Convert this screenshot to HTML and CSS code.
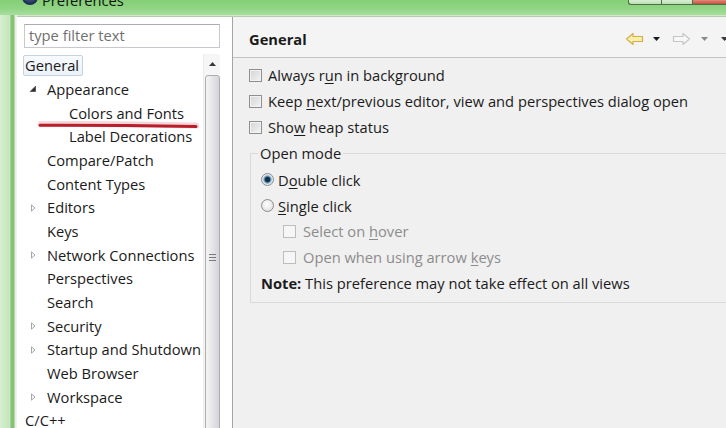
FILE: index.html
```html
<!DOCTYPE html>
<html>
<head>
<meta charset="utf-8">
<title>Preferences</title>
<link rel="stylesheet" href="styles.css">
</head>
<body>
<div class="window">
  <div class="titlebar">
    <span class="app-icon"></span>
    <span class="title">Preferences</span>
    <span class="spacer"></span>
    <div class="caption-buttons">
      <span class="cap cap-min"></span><span class="cap cap-max"></span><span class="cap cap-close"></span>
    </div>
  </div>
  <div class="frame">
    <div class="frame-left"></div>
    <div class="client">
      <div class="sidebar">
        <div class="filter">type filter text</div>
        <div class="tree-wrap">
          <ul class="tree">
            <li class="node lvl0"><span class="label selected">General</span></li>
            <li class="node lvl1"><span class="twisty"><svg width="8" height="8" viewBox="0 0 8 8"><path d="M6.5 1.2 L6.5 6.5 L1.2 6.5 Z" fill="#2e2e2e" stroke="#4a4a4a" stroke-width="0.8" stroke-linejoin="round"/></svg></span><span class="label">Appearance</span></li>
            <li class="node lvl2"><span class="twisty"></span><span class="label">Colors and Fonts</span></li>
            <li class="node lvl2"><span class="twisty"></span><span class="label">Label Decorations</span></li>
            <li class="node lvl1"><span class="twisty"></span><span class="label">Compare/Patch</span></li>
            <li class="node lvl1"><span class="twisty"></span><span class="label">Content Types</span></li>
            <li class="node lvl1"><span class="twisty"><svg width="8" height="8" viewBox="0 0 8 8"><path d="M2.5 0.8 L6 4 L2.5 7.2 Z" fill="#fafafa" stroke="#a8a8a8" stroke-width="1" stroke-linejoin="round"/></svg></span><span class="label">Editors</span></li>
            <li class="node lvl1"><span class="twisty"></span><span class="label">Keys</span></li>
            <li class="node lvl1"><span class="twisty"><svg width="8" height="8" viewBox="0 0 8 8"><path d="M2.5 0.8 L6 4 L2.5 7.2 Z" fill="#fafafa" stroke="#a8a8a8" stroke-width="1" stroke-linejoin="round"/></svg></span><span class="label">Network Connections</span></li>
            <li class="node lvl1"><span class="twisty"></span><span class="label">Perspectives</span></li>
            <li class="node lvl1"><span class="twisty"></span><span class="label">Search</span></li>
            <li class="node lvl1"><span class="twisty"><svg width="8" height="8" viewBox="0 0 8 8"><path d="M2.5 0.8 L6 4 L2.5 7.2 Z" fill="#fafafa" stroke="#a8a8a8" stroke-width="1" stroke-linejoin="round"/></svg></span><span class="label">Security</span></li>
            <li class="node lvl1"><span class="twisty"><svg width="8" height="8" viewBox="0 0 8 8"><path d="M2.5 0.8 L6 4 L2.5 7.2 Z" fill="#fafafa" stroke="#a8a8a8" stroke-width="1" stroke-linejoin="round"/></svg></span><span class="label">Startup and Shutdown</span></li>
            <li class="node lvl1"><span class="twisty"></span><span class="label">Web Browser</span></li>
            <li class="node lvl1"><span class="twisty"><svg width="8" height="8" viewBox="0 0 8 8"><path d="M2.5 0.8 L6 4 L2.5 7.2 Z" fill="#fafafa" stroke="#a8a8a8" stroke-width="1" stroke-linejoin="round"/></svg></span><span class="label">Workspace</span></li>
            <li class="node lvl0"><span class="label">C/C++</span></li>
          </ul>
          <div class="vscroll">
            <div class="sb-up"><svg width="7" height="4" viewBox="0 0 7 4"><path d="M0 4 L3.5 0 L7 4 Z" fill="#3a3a3a"/></svg></div>
            <div class="sb-thumb"><span class="grip"></span></div>
          </div>
          <svg class="annotation" width="162" height="10" viewBox="0 0 162 10">
            <path d="M2 3.2 Q80 2.6 158 4.6" fill="none" stroke="rgba(214,90,100,0.25)" stroke-width="6" stroke-linecap="round"/>
            <path d="M2 4.2 Q80 4 158 5.6" fill="none" stroke="#b91e2b" stroke-width="3" stroke-linecap="round"/>
          </svg>
        </div>
      </div>
      <div class="page">
        <div class="page-header">
          <span class="page-title">General</span>
          <div class="nav">
            <svg class="nav-back" width="19" height="14" viewBox="0 0 19 14"><path d="M1.5 7 L8 1.5 V4.5 H17.5 V9.5 H8 V12.5 Z" fill="#f8eeae" stroke="#d6ae48" stroke-width="1.2" stroke-linejoin="round"/></svg>
            <svg class="nav-drop" width="7" height="4" viewBox="0 0 7 4"><path d="M0 0 H7 L3.5 4 Z" fill="#1a1a1a"/></svg>
            <svg class="nav-fwd" width="19" height="14" viewBox="0 0 19 14"><path d="M17.5 7 L11 1.5 V4.5 H1.5 V9.5 H11 V12.5 Z" fill="#f7f7f7" stroke="#c6c6c6" stroke-width="1.2" stroke-linejoin="round"/></svg>
            <svg class="nav-drop2" width="7" height="4" viewBox="0 0 7 4"><path d="M0 0 H7 L3.5 4 Z" fill="#8a8a8a"/></svg>
            <svg class="nav-menu" width="7" height="4" viewBox="0 0 7 4"><path d="M0 0 H7 L3.5 4 Z" fill="#3a3a3a"/></svg>
          </div>
        </div>
        <div class="page-body">
          <div class="check"><span class="box"></span><span>Always r<u>u</u>n in background</span></div>
          <div class="check"><span class="box"></span><span>Keep <u>n</u>ext/previous editor, view and perspectives dialog open</span></div>
          <div class="check"><span class="box"></span><span>Sho<u>w</u> heap status</span></div>
          <fieldset class="group">
            <legend>Open mode</legend>
            <div class="option radio-item"><span class="radio checked"></span><span>D<u>o</u>uble click</span></div>
            <div class="option radio-item"><span class="radio"></span><span><u>S</u>ingle click</span></div>
            <div class="option sub disabled"><span class="box"></span><span>Select on <u>h</u>over</span></div>
            <div class="option sub disabled"><span class="box"></span><span>Open when using arrow <u>k</u>eys</span></div>
            <div class="option note"><b>Note:</b>&nbsp;This preference may not take effect on all views</div>
          </fieldset>
        </div>
      </div>
    </div>
  </div>
</div>
</body>
</html>
```

FILE: styles.css
```css
* { box-sizing: border-box; }
html, body { margin: 0; padding: 0; }
body {
  width: 726px;
  height: 428px;
  overflow: hidden;
  background: #f0f0f0;
  font-family: "Open Sans", "Noto Sans", "DejaVu Sans", sans-serif;
  font-size: 14.7px;
  color: #1b1b1b;
}
.window {
  width: 726px;
  height: 428px;
  display: flex;
  flex-direction: column;
  overflow: hidden;
}

/* title bar */
.titlebar {
  height: 15px;
  flex: none;
  display: flex;
  align-items: flex-start;
  overflow: hidden;
  background: linear-gradient(#84cf76, #92d586 60%, #a9de9e);
}
.app-icon {
  flex: none;
  width: 16px;
  height: 16px;
  margin: -11px 0 0 22px;
  border-radius: 50%;
  background: radial-gradient(circle at 50% 35%, #6a7fa8, #1d2c52 70%);
}
.title {
  margin: -10px 0 0 4px;
  line-height: 20px;
  color: #101010;
}
.spacer { flex: 1; }
.caption-buttons {
  display: flex;
  height: 5px;
  margin-right: -4px;
}
.cap {
  height: 5px;
  border: 1px solid #4c6f48;
  border-top: none;
}
.cap-min {
  width: 33px;
  border-right: none;
  border-radius: 0 0 0 3px;
  background: linear-gradient(#d8efd3, #b9dfb0);
}
.cap-max {
  width: 32px;
  background: linear-gradient(#d8efd3, #b9dfb0);
}
.cap-close {
  width: 37px;
  border-left: none;
  border-radius: 0 0 3px 0;
  background: linear-gradient(#e08a7a, #c54f3c);
}

/* frame */
.frame {
  flex: 1;
  display: flex;
  min-height: 0;
  background: #cfe9c8;
}
.frame-left {
  width: 17px;
  flex: none;
  background: linear-gradient(to right, #d6eed0 0, #c4e5bb 10px, #84c374 11px, #84c374 14px, #e4ebe1 15px, #f4f4f4 17px);
}
.client {
  flex: 1;
  min-width: 0;
  display: flex;
  margin-top: 1px;
  border-top: 1px solid #b7c9b2;
  background: #f0f0f0;
}

/* left tree */
.sidebar {
  width: 215px;
  flex: none;
  background: #fff;
  display: flex;
  flex-direction: column;
}
.filter {
  margin: 7px 12px 0 7px;
  height: 24px;
  flex: none;
  border: 1px solid #c6c9ce;
  border-top-color: #a9acb2;
  padding-left: 4px;
  line-height: 21px;
  color: #707070;
  background: #fff;
}
.tree-wrap {
  position: relative;
  flex: 1;
  min-height: 0;
  display: flex;
  margin-top: 6px;
  padding-right: 12px;
  overflow: hidden;
}
.tree {
  list-style: none;
  margin: 0;
  padding: 0;
  width: 186px;
  flex: none;
}
.node {
  height: 23.67px;
  display: flex;
  align-items: center;
  white-space: nowrap;
  color: #1a1a1a;
}
.lvl0 { padding-left: 6px; }
.lvl1 { padding-left: 6px; }
.lvl2 { padding-left: 28px; }
.twisty {
  width: 22px;
  height: 100%;
  flex: none;
  display: flex;
  align-items: center;
  padding-left: 6px;
}
.label {
  border: 1px solid transparent;
  border-radius: 2px;
  padding: 0 1px;
  line-height: 15px;
}
.label.selected {
  padding: 2px 3px 2px 1px;
  border-color: #c3d3df;
  background: linear-gradient(#f8fbfd, #ebf2f7);
}
.vscroll {
  width: 17px;
  flex: none;
  display: flex;
  flex-direction: column;
  align-items: center;
  background: #f6f6f6;
  border-left: 1px solid #ececec;
}
.sb-up {
  height: 19px;
  width: 100%;
  flex: none;
  display: flex;
  align-items: center;
  justify-content: center;
}
.sb-thumb {
  flex: none;
  margin-top: 2px;
  width: 15px;
  height: 364px;
  padding-top: 178px;
  border: 1px solid #acacb0;
  border-radius: 3px;
  background: linear-gradient(to right, #f5f5f5, #e7e7e7 45%, #d4d4da);
  display: flex;
  justify-content: center;
  align-items: flex-start;
}
.grip {
  width: 7px;
  height: 7px;
  background: linear-gradient(#7a7a7a 0 1px, transparent 1px 3px, #7a7a7a 3px 4px, transparent 4px 6px, #7a7a7a 6px 7px);
}
.annotation {
  position: absolute;
  left: 21px;
  top: 67px;
}

/* right page */
.page {
  flex: 1;
  min-width: 0;
  display: flex;
  flex-direction: column;
  border-left: 1px solid #a5a5a5;
  overflow: hidden;
}
.page-header {
  height: 41px;
  flex: none;
  display: flex;
  align-items: center;
  padding: 3px 0 0 16px;
  background: #f4f4f4;
  border-bottom: 1px solid #c3c3c3;
}
.page-title {
  font-weight: 700;
  color: #1a1a1a;
}
.nav {
  margin-left: auto;
  margin-right: -2px;
  display: flex;
  align-items: center;
}
.nav-drop { margin-left: 9px; }
.nav-fwd { margin-left: 12px; }
.nav-drop2 { margin-left: 10px; }
.nav-menu { margin-left: 13px; }

.page-body {
  flex: 1;
  min-height: 0;
  padding: 4px 0 0 16px;
  overflow: hidden;
}
.check {
  height: 26px;
  display: flex;
  align-items: center;
  white-space: nowrap;
}
.box {
  flex: none;
  width: 13px;
  height: 13px;
  margin-right: 6px;
  border: 1px solid #8f8f8f;
  background: linear-gradient(135deg, #d2d4d7, #f3f3f3);
  box-shadow: inset 0 0 0 1px #f2f2f2;
}
u {
  text-decoration-thickness: 1px;
  text-underline-offset: 2px;
}
.group {
  width: 520px;
  min-width: 0;
  margin: 3px 0 0 1px;
  padding: 4px 0 6px 7px;
  border: 1px solid #d6dadd;
}
.group legend {
  padding: 0 2px;
  line-height: 20px;
}
.option {
  height: 25.75px;
  display: flex;
  align-items: center;
  white-space: nowrap;
}
.radio-item { padding-left: 3px; }
.radio {
  flex: none;
  width: 13px;
  height: 13px;
  margin-right: 4px;
  border-radius: 50%;
  border: 1px solid #8c8c8c;
  background: radial-gradient(circle at 45% 40%, #ffffff, #dcdcdc 90%);
}
.radio.checked {
  background: radial-gradient(circle, #13324a 0 2.2px, #5f91b8 3.2px, #d7e2ea 4.6px, #f4f4f4 6px);
}
.sub { padding-left: 25px; }
.sub .box { margin-right: 7px; }
.disabled { color: #8c8c8c; }
.disabled .box {
  border-color: #bdbdbd;
  background: #f6f6f6;
  box-shadow: none;
}
.note { padding-left: 3px; }
.note b { font-weight: 700; }
```
